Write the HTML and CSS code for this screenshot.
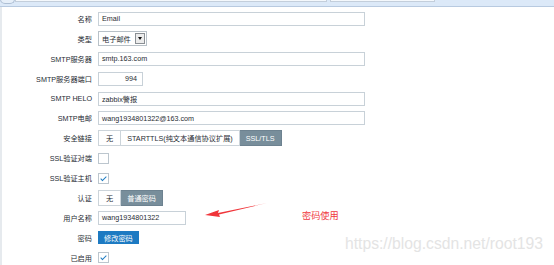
FILE: index.html
```html
<!DOCTYPE html>
<html lang="zh">
<head>
    <meta charset="UTF-8">
    <title>报警媒介类型</title>
    <link rel="stylesheet" href="styles.css">
</head>
<body>

    <!-- Bandeau du haut -->
    <div class="top-strip">
        <div class="tab-round"></div>
        <div class="tab tab-wide"></div>
        <div class="tab tab-small"></div>
    </div>

    <div class="panel">
        <div class="form-grid">
            <label>名称</label>
            <div class="field"><span class="input input-long">Email</span></div>

            <label>类型</label>
            <div class="field">
                <span class="select">电子邮件<span class="select-arrow"></span></span>
            </div>

            <label>SMTP服务器</label>
            <div class="field"><span class="input input-long">smtp.163.com</span></div>

            <label>SMTP服务器端口</label>
            <div class="field"><span class="input input-port">994</span></div>

            <label>SMTP HELO</label>
            <div class="field"><span class="input input-long">zabbix警报</span></div>

            <label>SMTP电邮</label>
            <div class="field"><span class="input input-long">wang1934801322@163.com</span></div>

            <label>安全链接</label>
            <div class="field">
                <div class="segmented">
                    <span class="seg">无</span>
                    <span class="seg">STARTTLS(纯文本通信协议扩展)</span>
                    <span class="seg seg-on">SSL/TLS</span>
                </div>
            </div>

            <label>SSL验证对端</label>
            <div class="field"><span class="checkbox"></span></div>

            <label>SSL验证主机</label>
            <div class="field"><span class="checkbox checked"></span></div>

            <label>认证</label>
            <div class="field">
                <div class="segmented">
                    <span class="seg">无</span>
                    <span class="seg seg-on">普通密码</span>
                </div>
            </div>

            <label>用户名称</label>
            <div class="field"><span class="input input-user">wang1934801322</span></div>

            <label>密码</label>
            <div class="field"><span class="btn-blue">修改密码</span></div>

            <label>已启用</label>
            <div class="field"><span class="checkbox checked"></span></div>
        </div>
    </div>

    <!-- Annotation rouge -->
    <svg class="note-arrow" width="70" height="20" viewBox="0 0 70 20">
        <path d="M63 1 L14 11 L15 8 L1 13 L16 15 L15 12.5 Z" fill="#f0353a"/>
    </svg>
    <span class="note-text">密码使用</span>

    <span class="watermark">https://blog.csdn.net/root193</span>

</body>
</html>
```

FILE: styles.css
```css
body {
    margin: 0;
    background-color: #ffffff;
    font-family: "Liberation Sans", "Noto Sans CJK SC", sans-serif;
    font-size: 7.2px;
    color: #1f2c33;
    width: 554px;
    height: 265px;
    overflow: hidden;
    position: relative;
}

.top-strip {
    height: 6px;
    background-color: #dce9f8;
    border-bottom: 1px solid #b8cae0;
    display: flex;
    align-items: flex-start;
}

.tab-round {
    width: 13px;
    height: 4px;
    border: 1px solid #aebfd4;
    border-top: none;
    border-radius: 0 0 7px 7px;
    background-color: #e6eff9;
    margin-top: -1px;
}

.tab {
    height: 1px;
    border: 1px solid #c3cedb;
    border-top: none;
    background-color: #f4f8fc;
}

.tab-wide {
    width: 310px;
}

.tab-small {
    width: 103px;
    margin-left: 3px;
}

.panel {
    border-left: 2px solid #e6eaee;
    height: 258px;
    padding-top: 2px;
    box-sizing: border-box;
}

.form-grid {
    display: grid;
    grid-template-columns: 90px auto;
    grid-auto-rows: 19.9px;
    column-gap: 6px;
}

.form-grid label {
    display: flex;
    align-items: center;
    justify-content: flex-end;
    white-space: nowrap;
}

.field {
    display: flex;
    align-items: center;
}

.input {
    height: 14px;
    border: 1px solid #c8d1d8;
    box-sizing: border-box;
    background-color: #fff;
    padding: 0 3px;
    display: flex;
    align-items: center;
    white-space: nowrap;
}

.input-long {
    width: 267px;
}

.input-port {
    width: 45px;
    justify-content: flex-end;
    padding-right: 5px;
}

.input-user {
    width: 88px;
}

.select {
    width: 49px;
    height: 15px;
    border: 1px solid #b8c1c8;
    box-sizing: border-box;
    display: flex;
    align-items: center;
    justify-content: space-between;
    padding: 0 1px 0 3px;
}

.select-arrow {
    width: 10px;
    height: 11px;
    border: 1px solid #8a8f94;
    box-sizing: border-box;
    background-color: #ececec;
    position: relative;
}

.select-arrow::after {
    content: "";
    position: absolute;
    left: 2px;
    top: 3px;
    border-left: 2px solid transparent;
    border-right: 2px solid transparent;
    border-top: 3px solid #111;
}

.segmented {
    display: flex;
    height: 16px;
}

.seg {
    border: 1px solid #ccd4da;
    border-left: none;
    padding: 0 6px;
    display: flex;
    align-items: center;
    background-color: #fff;
    white-space: nowrap;
}

.seg:first-child {
    border-left: 1px solid #ccd4da;
    padding: 0 7px;
}

.seg-on {
    background-color: #788e9b;
    border-color: #6d8290;
    color: #ffffff;
}

.checkbox {
    width: 11px;
    height: 11px;
    border: 1px solid #bcc6ce;
    box-sizing: border-box;
    background-color: #fff;
    position: relative;
}

.checkbox.checked::after {
    content: "";
    position: absolute;
    left: 3px;
    top: 1px;
    width: 2px;
    height: 5px;
    border-right: 1.5px solid #1f7dc3;
    border-bottom: 1.5px solid #1f7dc3;
    transform: rotate(45deg);
}

.btn-blue {
    background-color: #1d7ac2;
    color: #ffffff;
    height: 13px;
    padding: 0 6px;
    display: flex;
    align-items: center;
}

/* Annotation au-dessus du formulaire */
.note-arrow {
    position: absolute;
    left: 204px;
    top: 202px;
}

.note-text {
    position: absolute;
    left: 302px;
    top: 208px;
    color: #f03a3e;
    font-size: 9.2px;
}

.watermark {
    position: absolute;
    left: 345px;
    top: 235px;
    color: #e4e4e4;
    font-size: 15.7px;
    white-space: nowrap;
}
```
